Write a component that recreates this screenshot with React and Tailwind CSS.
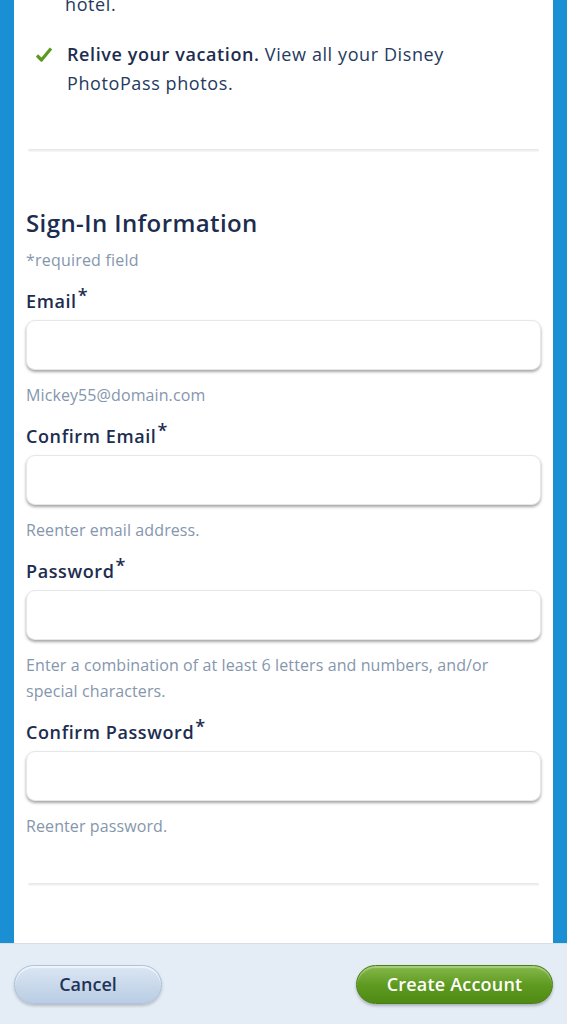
import React from "react";

const fields = [
  { label: "Email", hint: "Mickey55@domain.com" },
  { label: "Confirm Email", hint: "Reenter email address." },
  { label: "Password", hint: "Enter a combination of at least 6 letters and numbers, and/or special characters." },
  { label: "Confirm Password", hint: "Reenter password." },
];

const Check = () => (
  <svg width="16" height="15" viewBox="0 0 16 15" className="shrink-0 mt-[7px]">
    <path d="M1 8.5 L5.5 13 L15 1.5" fill="none" stroke="#5b9a1e" strokeWidth="3.2" strokeLinejoin="round" />
  </svg>
);

const Divider = () => (
  <div className="mx-[14px] h-[3px] bg-gradient-to-b from-[#e4e6e9] to-[#f7f8f9] rounded-full" />
);

const App = () => {
  return (
    <div
      className="w-[567px] h-[1024px] overflow-hidden flex flex-col bg-[#1a8fd4]"
      style={{ fontFamily: "'Open Sans', Lato, sans-serif" }}
    >
      <div className="flex-1 mx-[14px] bg-white overflow-hidden">
        <div className="-mt-[10px] pl-[51px] pr-6 text-[18px] leading-[29px] tracking-[0.6px] text-[#253a5e]">hotel.</div>

        <div className="flex gap-[15px] pl-[22px] pr-6 mt-[21px] text-[18px] leading-[29px] tracking-[0.6px] text-[#253a5e]">
          <Check />
          <p>
            <span className="font-semibold text-[#1c2d4f]">Relive your vacation.</span> View all your Disney
            <br />
            PhotoPass photos.
          </p>
        </div>

        <div className="mt-[51px]">
          <Divider />
        </div>

        <div className="px-3 pt-[56px]">
          <h2 className="text-[24px] leading-[30px] font-semibold tracking-[0.4px] text-[#1c2d4f]">Sign-In Information</h2>
          <p className="mt-[12px] text-[16px] leading-[20px] tracking-[0.2px] text-[#8596ad]">*required field</p>

          {fields.map((f, i) => (
            <div key={f.label} className={i === 0 ? "mt-[20px]" : "mt-[17px]"}>
              <div className="text-[18px] leading-[22px] font-semibold tracking-[0.6px] text-[#1c2d4f]">
                {f.label}
                <span className="text-[18px] relative -top-[6px] ml-[1px]">*</span>
              </div>
              <div className="mt-[8px] h-[50px] rounded-[9px] bg-white border border-[#e6e7ea] shadow-[0_2px_3px_rgba(0,0,0,0.35)]" />
              <p className="mt-[12px] pr-[10px] text-[16px] leading-[26px] tracking-[0.1px] text-[#8596ad]">{f.hint}</p>
            </div>
          ))}
        </div>

        <div className="mt-[44px]">
          <Divider />
        </div>
      </div>

      <div className="h-[81px] bg-[#e4ecf6] border-t border-[#d9dee5] flex items-center justify-between px-[14px]">
        <button className="w-[148px] h-[39px] rounded-full text-[18px] font-semibold text-[#1f3358] bg-gradient-to-b from-[#dbe6f3] to-[#b9cde4] border border-[#aec2da] shadow-[0_2px_3px_rgba(0,0,0,0.2),inset_0_2px_1px_rgba(255,255,255,0.6)]">
          Cancel
        </button>
        <button className="w-[197px] h-[39px] rounded-full text-[18px] font-semibold tracking-[0.2px] text-white bg-gradient-to-b from-[#86b94a] via-[#5f9b20] to-[#4f8a15] border border-[#4a8012] shadow-[0_2px_3px_rgba(0,0,0,0.25),inset_0_2px_1px_rgba(255,255,255,0.3)]">
          Create Account
        </button>
      </div>
    </div>
  );
};

export default App;
